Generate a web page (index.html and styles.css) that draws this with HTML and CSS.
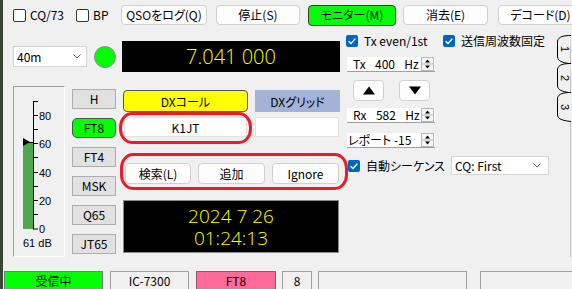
FILE: index.html
```html
<!DOCTYPE html>
<html lang="ja">
<head>
<meta charset="utf-8">
<link rel="stylesheet" href="styles.css">
</head>
<body>
<div class="app">
  <div class="toolbar">
    <label class="chk chk-cq"><span class="box"></span>CQ/73</label>
    <label class="chk chk-bp"><span class="box"></span>BP</label>
    <button class="btn b-qso">QSOをログ(Q)</button>
    <button class="btn b-stop">停止(S)</button>
    <button class="btn b-mon">モニター(M)</button>
    <button class="btn b-clr">消去(E)</button>
    <button class="btn b-dec">デコード(D)</button>
  </div>

  <div class="main">
    <div class="lc">
      <div class="row1">
        <div class="combo band"><span>40m</span><svg class="chev" width="8" height="5" viewBox="0 0 8 5"><polyline points="0.5,0.5 4,4 7.5,0.5" fill="none" stroke="#606060" stroke-width="1"/></svg></div>
        <div class="led"></div>
        <div class="freq">7.041 000</div>
      </div>
      <div class="row2">
        <div class="meter">
          <svg width="50" height="169" viewBox="0 0 50 169">
            <rect x="9" y="55" width="10" height="87" fill="#4fa74f"/>
            <polygon points="9,51 9,59 16,55" fill="#000"/>
            <line x1="9" y1="55.5" x2="19" y2="55.5" stroke="#000" stroke-width="1"/>
            <line x1="19.5" y1="14" x2="19.5" y2="142.5" stroke="#000" stroke-width="1"/>
            <g stroke="#000" stroke-width="1">
              <line x1="19" y1="14.5" x2="24" y2="14.5"/>
              <line x1="19" y1="28.5" x2="24" y2="28.5"/>
              <line x1="19" y1="42.5" x2="24" y2="42.5"/>
              <line x1="19" y1="56.5" x2="24" y2="56.5"/>
              <line x1="19" y1="70.5" x2="24" y2="70.5"/>
              <line x1="19" y1="85.5" x2="24" y2="85.5"/>
              <line x1="19" y1="99.5" x2="24" y2="99.5"/>
              <line x1="19" y1="113.5" x2="24" y2="113.5"/>
              <line x1="19" y1="127.5" x2="24" y2="127.5"/>
              <line x1="19" y1="142" x2="24" y2="142"/>
            </g>
            <g class="mlab" font-size="11" fill="#000">
              <text x="25" y="32.5">80</text>
              <text x="25" y="60.5">60</text>
              <text x="25" y="89.5">40</text>
              <text x="25" y="117.5">20</text>
              <text x="25" y="146">0</text>
              <text x="9" y="160">61 dB</text>
            </g>
          </svg>
        </div>
        <div class="modes">
          <div class="mode">H</div>
          <div class="mode on">FT8</div>
          <div class="mode">FT4</div>
          <div class="mode">MSK</div>
          <div class="mode">Q65</div>
          <div class="mode">JT65</div>
        </div>
        <div class="center">
          <div class="dxrow">
            <div class="dxcall">DXコール</div>
            <div class="dxgrid">DXグリッド</div>
          </div>
          <div class="inrow">
            <div class="field callf">K1JT</div>
            <div class="field gridf"></div>
          </div>
          <div class="btnrow">
            <button class="btn sbtn">検索(L)</button>
            <button class="btn sbtn w67">追加</button>
            <button class="btn sbtn w67">Ignore</button>
          </div>
          <div class="clock">
            <div>2024 7 26</div>
            <div>01:24:13</div>
          </div>
          <div class="ring ring1"></div>
          <div class="ring ring2"></div>
        </div>
      </div>
    </div>

    <div class="right">
      <div class="chkrow">
        <label class="cb cb-tx"><span class="tick"><svg width="12" height="12" viewBox="0 0 12 12"><polyline points="2.6,6.2 5,8.5 9.4,3.6" fill="none" stroke="#fff" stroke-width="1.4"/></svg></span>Tx even/1st</label>
        <label class="cb"><span class="tick"><svg width="12" height="12" viewBox="0 0 12 12"><polyline points="2.6,6.2 5,8.5 9.4,3.6" fill="none" stroke="#fff" stroke-width="1.4"/></svg></span>送信周波数固定</label>
      </div>
      <div class="spin spin-tx">
        <span class="val">Tx  400  Hz</span>
        <svg class="arr" width="13" height="14" viewBox="0 0 13 14"><rect x="0.5" y="0.5" width="12" height="13" fill="#f6f6f6" stroke="#b8b8b8"/><line x1="1" y1="7" x2="12" y2="7" stroke="#b8b8b8"/><polygon points="4,5.5 9,5.5 6.5,2.5" fill="#000"/><polygon points="4,8.5 9,8.5 6.5,11.5" fill="#000"/></svg>
      </div>
      <div class="arrows">
        <button class="btn abtn"><svg width="12" height="9" viewBox="0 0 12 9"><polygon points="0,8.5 12,8.5 6,0.5" fill="#000"/></svg></button>
        <button class="btn abtn"><svg width="12" height="9" viewBox="0 0 12 9"><polygon points="0,0.5 12,0.5 6,8.5" fill="#000"/></svg></button>
      </div>
      <div class="spin spin-rx">
        <span class="val">Rx  582  Hz</span>
        <svg class="arr" width="13" height="14" viewBox="0 0 13 14"><rect x="0.5" y="0.5" width="12" height="13" fill="#f6f6f6" stroke="#b8b8b8"/><line x1="1" y1="7" x2="12" y2="7" stroke="#b8b8b8"/><polygon points="4,5.5 9,5.5 6.5,2.5" fill="#000"/><polygon points="4,8.5 9,8.5 6.5,11.5" fill="#000"/></svg>
      </div>
      <div class="spin spin-rep">
        <span class="val rep">レポート -15</span>
        <svg class="arr" width="13" height="14" viewBox="0 0 13 14"><rect x="0.5" y="0.5" width="12" height="13" fill="#f6f6f6" stroke="#b8b8b8"/><line x1="1" y1="7" x2="12" y2="7" stroke="#b8b8b8"/><polygon points="4,5.5 9,5.5 6.5,2.5" fill="#000"/><polygon points="4,8.5 9,8.5 6.5,11.5" fill="#000"/></svg>
      </div>
      <div class="autorow">
        <label class="cb cb-auto"><span class="tick"><svg width="12" height="12" viewBox="0 0 12 12"><polyline points="2.6,6.2 5,8.5 9.4,3.6" fill="none" stroke="#fff" stroke-width="1.4"/></svg></span>自動シーケンス</label>
        <div class="combo cqcombo"><span>CQ: First</span><svg class="chev" width="8" height="5" viewBox="0 0 8 5"><polyline points="0.5,0.5 4,4 7.5,0.5" fill="none" stroke="#606060" stroke-width="1"/></svg></div>
      </div>
    </div>

    <div class="tabs">
      <svg width="16" height="222" viewBox="0 0 16 222">
        <line x1="14.5" y1="0" x2="14.5" y2="222" stroke="#c4c4c4"/>
        <g fill="#f0f0f0" stroke="#000" stroke-width="1">
          <path d="M15 57.5 C8 57.5 2.5 58.5 1.5 63 L1.5 80 C2 84 6 85.5 15 86.5"/>
          <path d="M15 28.5 C8 28.5 2.5 29.5 1.5 34 L1.5 51 C2 55 6 56.5 13 57.5"/>
          <path d="M15 0.5 C8 0.5 2.5 1.5 1.5 6 L1.5 22 C2 26 6 27.5 13 28.5"/>
        </g>
        <g font-size="11" fill="#000" text-anchor="middle" class="tabtxt">
          <text x="0" y="0" transform="translate(8.5,14) rotate(90)" dy="4">1</text>
          <text x="0" y="0" transform="translate(8.5,43) rotate(90)" dy="4">2</text>
          <text x="0" y="0" transform="translate(8.5,72) rotate(90)" dy="4">3</text>
        </g>
      </svg>
    </div>
  </div>

  <div class="status">
    <div class="sp st-rx">受信中</div>
    <div class="sp st-rig">IC-7300</div>
    <div class="sp st-mode">FT8</div>
    <div class="sp st-n">8</div>
    <div class="sp st-e1"></div>
    <div class="sp st-e2"></div>
  </div>
</div>
</body>
</html>
```

FILE: styles.css
```css
* { box-sizing: border-box; }
html, body { margin: 0; padding: 0; }
body {
  width: 572px;
  height: 289px;
  overflow: hidden;
  background: #f0f0f0;
  font-family: "Noto Sans CJK JP", "Noto Sans", sans-serif;
  font-size: 12px;
  color: #000;
  font-feature-settings: "palt";
}
.app {
  position: relative;
  width: 572px;
  height: 289px;
  overflow: hidden;
  padding-top: 4px;
  background: linear-gradient(to right, #3a4733 0, #3a4733 3px, #f0f0f0 3px);
}

/* toolbar */
.toolbar {
  display: flex;
  align-items: center;
  height: 22px;
  padding-left: 13px;
}
.toolbar > * { flex: none; }
.chk { display: flex; align-items: center; gap: 4px; line-height: 1; }
.chk .box {
  width: 13px; height: 13px;
  border: 1px solid #333;
  border-radius: 2px;
  background: #fff;
}
.chk-cq { width: 63px; }
.chk-bp { width: 45px; }

.btn {
  height: 20px;
  border: 1px solid #d0d0d0;
  border-radius: 4px;
  background: #fdfdfd;
  font: inherit;
  color: #000;
  padding: 0;
  display: flex;
  align-items: center;
  justify-content: center;
  line-height: 1;
}
.b-qso { width: 86px; }
.b-stop { width: 84px; margin-left: 9px; }
.b-mon { width: 88px; margin-left: 8px; height: 21px; background: #00ff00; border-color: #3a3a3a; }
.b-clr { width: 85px; margin-left: 7px; }
.b-dec { width: 85px; margin-left: 10px; }

/* main */
.main { display: flex; margin-top: 9px; height: 236px; }
.lc { width: 346px; padding-left: 13px; flex: none; }
.row1 { display: flex; align-items: center; margin-top: 6px; height: 31px; }
.combo {
  background: #fff;
  border: 1px solid #d4d4d4;
  display: flex;
  align-items: center;
  justify-content: space-between;
  padding: 0 5px 0 3px;
  flex: none;
}
.band { width: 74px; height: 21px; margin-right: 7px; }
.led {
  width: 22px; height: 22px;
  border-radius: 50%;
  background: #00ff00;
  border: 1px solid #8a8a8a;
  margin-right: 6px;
  flex: none;
}
.freq {
  width: 218px; height: 31px;
  background: #000;
  color: #ffff00;
  font-family: "Open Sans", Roboto, sans-serif;
  font-weight: 300;
  font-size: 20px;
  display: flex;
  align-items: center;
  justify-content: center;
  flex: none;
}

.row2 { display: flex; align-items: flex-start; margin-top: 14px; }
.meter {
  width: 52px; height: 171px;
  border-top: 1px solid #a0a0a0;
  border-left: 1px solid #a0a0a0;
  border-right: 1px solid #fff;
  border-bottom: 1px solid #fff;
  margin-right: 7px;
  flex: none;
}
.meter svg { display: block; }
.mlab, .tabtxt { font-family: "Liberation Sans", Arial, sans-serif; }

.modes {
  width: 44px;
  margin-top: 3px;
  margin-right: 7px;
  display: flex;
  flex-direction: column;
  gap: 9px;
  flex: none;
}
.mode {
  height: 20px;
  background: #e1e1e1;
  border: 1px solid #adadad;
  display: flex;
  align-items: center;
  justify-content: center;
  line-height: 1;
}
.mode.on { background: #00ff00; border-color: #505050; border-radius: 5px; }

.center { width: 217px; margin-top: 4px; position: relative; flex: none; }
.dxrow { display: flex; gap: 7px; height: 22px; }
.dxcall {
  width: 125px;
  background: #ffff00;
  border: 1px solid #555;
  border-radius: 4px;
  display: flex; align-items: center; justify-content: center;
}
.dxgrid {
  width: 85px;
  background: #a3b2d6;
  display: flex; align-items: center; justify-content: center;
}
.inrow { display: flex; gap: 8px; margin-top: 5px; padding-left: 1px; height: 20px; }
.field {
  background: #fff;
  border: 1px solid #e2e2e2;
  display: flex; align-items: center; justify-content: center;
}
.callf { width: 123px; }
.gridf { width: 84px; }
.btnrow { display: flex; gap: 7px; margin-top: 26px; padding-left: 2px; }
.sbtn { width: 66px; height: 21px; }
.sbtn.w67 { width: 67px; }
.clock {
  margin-top: 16px;
  width: 216px; height: 53px;
  background: #000;
  border: 1px solid #8a8a8a;
  color: #ffff00;
  font-family: "Open Sans", Roboto, sans-serif;
  font-weight: 300;
  font-size: 19px;
  line-height: 22px;
  display: flex;
  flex-direction: column;
  align-items: center;
  justify-content: center;
}
.ring {
  position: absolute;
  border: 3px solid #e81d25;
  border-radius: 13px / 15px;
}
.ring1 { left: -4px; top: 22px; width: 133px; height: 32px; }
.ring2 { left: -3px; top: 63px; width: 228px; height: 37px; }

/* right */
.right { width: 210px; flex: none; }
.chkrow { display: flex; align-items: center; height: 12px; }
.cb { display: flex; align-items: center; gap: 6px; line-height: 1; flex: none; }
.cb .tick {
  width: 12px; height: 12px;
  border-radius: 2px;
  background: #0067c0;
  display: flex;
}
.cb-tx { width: 97px; }
.spin {
  display: flex;
  align-items: center;
  width: 88px;
  height: 15px;
  margin-left: 1px;
  background: #fff;
  border-bottom: 1px solid #a0a0a0;
}
.spin .val { flex: 1; padding-left: 6px; white-space: pre; word-spacing: 2px; line-height: 1; }
.spin .val.rep { padding-left: 1px; word-spacing: 0; }
.spin .arr { flex: none; margin-right: 1px; }
.spin-tx { margin-top: 10px; }
.arrows { display: flex; gap: 15px; margin-top: 8px; padding-left: 7px; }
.abtn { width: 31px; height: 21px; }
.spin-rx { margin-top: 7px; }
.spin-rep { margin-top: 10px; }
.autorow { display: flex; align-items: center; margin-top: 8px; height: 19px; padding-left: 2px; }
.cb-auto { width: 103px; }
.cqcombo { width: 98px; height: 19px; padding-left: 3px; padding-right: 7px; }

.tabs { width: 16px; flex: none; }
.tabs svg { display: block; }

/* status bar */
.status { display: flex; height: 18px; }
.sp {
  flex: none;
  height: 18px;
  border: 1px solid #a0a0a0;
  border-bottom: none;
  display: flex;
  align-items: center;
  justify-content: center;
  line-height: 1;
}
.st-rx { margin-left: 4px; width: 99px; background: #00ff00; border-color: #7a7a7a; }
.st-rig { margin-left: 7px; width: 79px; }
.st-mode { margin-left: 7px; width: 80px; background: #ff6a9a; border-color: #9a5470; }
.st-n { margin-left: 6px; width: 30px; }
.st-e1 { margin-left: 6px; width: 149px; }
.st-e2 { margin-left: 13px; width: 100px; }
```
